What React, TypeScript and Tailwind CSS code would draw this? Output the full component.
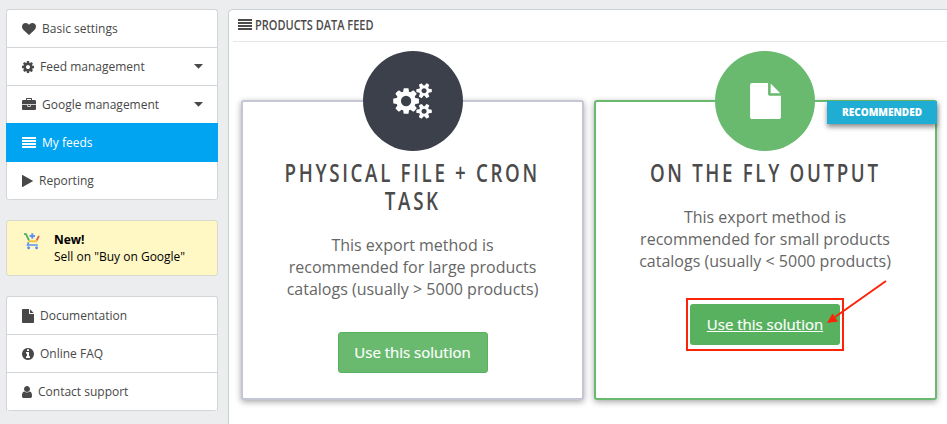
import type { ReactNode } from 'react';
import clsx from 'clsx';

const ICONS = {
  heart: {
    box: '0 0 1792 1792',
    size: 'w-[14px] h-[14px]',
    d: 'M896 1664q-26 0-44-18l-624-602q-10-8-27.5-26t-55.5-65.5-68-97.5-53.5-121-23.5-138q0-220 127-344t351-124q62 0 126.5 21.5t120 58 95.5 68.5 76 68q36-36 76-68t95.5-68.5 120-58 126.5-21.5q224 0 351 124t127 344q0 221-229 450l-623 600q-18 18-44 18z',
  },
  cog: {
    box: '128 0 1536 1792',
    size: 'w-[12px] h-[14px]',
    d: 'M1152 896q0-106-75-181t-181-75-181 75-75 181 75 181 181 75 181-75 75-181zm512-109v222q0 12-8 23t-20 13l-185 28q-19 54-39 91 35 50 107 138 10 12 10 25t-9 23q-27 37-99 108t-94 71q-12 0-26-9l-138-108q-44 23-91 38-16 136-29 186-7 28-36 28h-222q-14 0-24.5-8.5t-11.5-21.5l-28-184q-49-16-90-37l-141 107q-10 9-25 9-14 0-25-11-126-114-165-168-7-10-7-23 0-12 8-23 15-21 51-66.5t54-70.5q-27-50-41-99l-183-27q-13-2-21-12.5t-8-23.5v-222q0-12 8-23t19-13l186-28q14-46 39-92-40-57-107-138-10-12-10-24 0-10 9-23 26-36 98.5-107.5t94.5-71.5q13 0 26 10l138 107q44-23 91-38 16-136 29-186 7-28 36-28h222q14 0 24.5 8.5t11.5 21.5l28 184q49 16 90 37l142-107q9-9 24-9 13 0 25 10 129 119 165 170 7 8 7 22 0 12-8 23-15 21-51 66.5t-54 70.5q26 50 41 98l183 28q13 2 21 12.5t8 23.5z',
  },
  briefcase: {
    box: '0 0 1792 1792',
    size: 'w-[14px] h-[14px]',
    d: 'M640 256h512v-128h-512v128zm1152 640v480q0 66-47 113t-113 47h-1472q-66 0-113-47t-47-113v-480h672v160q0 26 19 45t45 19h320q26 0 45-19t19-45v-160h672zm-768 0v128h-256v-128h256zm768-480v384h-1792v-384q0-66 47-113t113-47h352v-160q0-40 28-68t68-28h576q40 0 68 28t28 68v160h352q66 0 113 47t47 113z',
  },
  lines: {
    box: '0 0 14 14',
    size: 'w-[14px] h-[14px]',
    d: 'M0 1h14v2H0zM0 4h14v2H0zM0 7h14v2H0zM0 10h14v2H0z',
  },
  play: {
    box: '0 0 11 14',
    size: 'w-[11px] h-[14px]',
    d: 'M0 1.3Q0 .7 .6 1L10.8 6.7Q11.2 7 10.8 7.3L.6 13Q0 13.3 0 12.7z',
  },
  file: {
    box: '128 0 1536 1792',
    size: 'w-[12px] h-[14px]',
    d: 'M1152 512v-472q22 14 36 28l408 408q14 14 28 36h-472zm-128 32q0 40 28 68t68 28h544v1056q0 40-28 68t-68 28h-1344q-40 0-68-28t-28-68v-1600q0-40 28-68t68-28h800v544z',
  },
  info: {
    box: '128 0 1536 1792',
    size: 'w-[12px] h-[14px]',
    d: 'M1152 1376v-160q0-14-9-23t-23-9h-96v-512q0-14-9-23t-23-9h-320q-14 0-23 9t-9 23v160q0 14 9 23t23 9h96v320h-96q-14 0-23 9t-9 23v160q0 14 9 23t23 9h448q14 0 23-9t9-23zm-128-896v-160q0-14-9-23t-23-9h-192q-14 0-23 9t-9 23v160q0 14 9 23t23 9h192q14 0 23-9t9-23zm640 416q0 209-103 385.5t-279.5 279.5-385.5 103-385.5-103-279.5-279.5-103-385.5 103-385.5 279.5-279.5 385.5-103 385.5 103 279.5 279.5 103 385.5z',
  },
  user: {
    box: '256 0 1280 1792',
    size: 'w-[10px] h-[14px]',
    d: 'M1536 1399q0 109-62.5 187t-150.5 78h-854q-88 0-150.5-78t-62.5-187q0-85 8.5-160.5t31.5-152 58.5-131 94-89 134.5-34.5q131 128 313 128t313-128q76 0 134.5 34.5t94 89 58.5 131 31.5 152 8.5 160.5zm-256-887q0 159-112.5 271.5t-271.5 112.5-271.5-112.5-112.5-271.5 112.5-271.5 271.5-112.5 271.5 112.5 112.5 271.5z',
  },
  cogs: {
    box: '-64 0 1920 1792',
    size: 'w-[39px] h-[36px]',
    d: 'M832 896q0-106-75-181t-181-75-181 75-75 181 75 181 181 75 181-75 75-181zm768 512q0-52-38-90t-90-38-90 38-38 90q0 53 37.5 90.5t90.5 37.5 90.5-37.5 37.5-90.5zm0-1024q0-52-38-90t-90-38-90 38-38 90q0 53 37.5 90.5t90.5 37.5 90.5-37.5 37.5-90.5zm-384 421v185q0 10-7 19.5t-16 10.5l-155 24q-11 35-32 76 34 48 90 115 7 11 7 20 0 12-7 19-23 30-82.5 89.5t-78.5 59.5q-11 0-21-7l-115-90q-37 19-77 31-11 108-23 155-7 24-30 24h-186q-11 0-20-7.5t-10-17.5l-23-153q-34-10-75-31l-118 89q-7 7-20 7-11 0-21-8-144-133-144-160 0-9 7-19 10-14 41-53t47-61q-23-44-35-82l-152-24q-10-1-17-9.5t-7-19.5v-185q0-10 7-19.5t16-10.5l155-24q11-35 32-76-34-48-90-115-7-11-7-20 0-12 7-20 22-30 82-89t79-59q11 0 21 7l115 90q34-18 77-32 11-108 23-154 7-24 30-24h186q11 0 20 7.5t10 17.5l23 153q34 10 75 31l118-89q8-7 20-7 11 0 21 8 144 133 144 160 0 8-7 19-12 16-42 54t-45 60q23 48 34 82l152 23q10 2 17 10.5t7 19.5zm640 533v140q0 16-149 31-12 27-30 52 51 113 51 138 0 4-4 7-122 71-124 71-8 0-46-47t-52-68q-20 2-30 2t-30-2q-14 21-52 68t-46 47q-2 0-124-71-4-3-4-7 0-25 51-138-18-25-30-52-149-15-149-31v-140q0-16 149-31 13-29 30-52-51-113-51-138 0-4 4-7 4-2 35-20t59-34 30-16q8 0 46 46.5t52 67.5q20-2 30-2t30 2q51-71 92-112l6-2q4 0 124 70 4 3 4 7 0 25-51 138 17 23 30 52 149 15 149 31zm0-1024v140q0 16-149 31-12 27-30 52 51 113 51 138 0 4-4 7-122 71-124 71-8 0-46-47t-52-68q-20 2-30 2t-30-2q-14 21-52 68t-46 47q-2 0-124-71-4-3-4-7 0-25 51-138-18-25-30-52-149-15-149-31v-140q0-16 149-31 13-29 30-52-51-113-51-138 0-4 4-7 4-2 35-20t59-34 30-16q8 0 46 46.5t52 67.5q20-2 30-2t30 2q51-71 92-112l6-2q4 0 124 70 4 3 4 7 0 25-51 138 17 23 30 52 149 15 149 31z',
  },
};

type IconName = keyof typeof ICONS;

interface MenuItem {
  icon: IconName;
  label: string;
  active?: boolean;
  caret?: boolean;
}

const MAIN_MENU: MenuItem[] = [
  { icon: 'heart', label: 'Basic settings' },
  { icon: 'cog', label: 'Feed management', caret: true },
  { icon: 'briefcase', label: 'Google management', caret: true },
  { icon: 'lines', label: 'My feeds', active: true },
  { icon: 'play', label: 'Reporting' },
];

const HELP_MENU: MenuItem[] = [
  { icon: 'file', label: 'Documentation' },
  { icon: 'info', label: 'Online FAQ' },
  { icon: 'user', label: 'Contact support' },
];

function Icon({ name, className }: { name: IconName; className?: string }) {
  const icon = ICONS[name];
  return (
    <svg viewBox={icon.box} fill="currentColor" className={clsx('shrink-0', className ?? icon.size)}>
      <path d={icon.d} />
    </svg>
  );
}

function Menu({ items, className }: { items: MenuItem[]; className?: string }) {
  return (
    <ul className={clsx('border-x border-t border-[#d3d5d6] bg-white', className)}>
      {items.map((item) => (
        <li
          key={item.label}
          className={clsx(
            'flex h-[38px] items-center border-b pl-[15px] pr-[14px] text-[12px]',
            item.active
              ? '-mx-px -mt-px h-[39px] border-[#00a4f0] bg-[#00a4f0] pl-[16px] pt-px text-white'
              : 'border-[#d3d5d6] text-[#484848] last:rounded-b-[3px]',
          )}
        >
          <Icon name={item.icon} />
          <span className="ml-[6px] grow">{item.label}</span>
          {item.caret && (
            <svg viewBox="0 0 9 5" className="h-[5px] w-[9px] fill-[#484848]">
              <path d="M0 0h9L4.500 4.700z" />
            </svg>
          )}
        </li>
      ))}
    </ul>
  );
}

function CartIcon() {
  return (
    <svg viewBox="0 0 16 17" fill="none" className="mt-[12px] h-[17px] w-[16px]">
      <path d="M0 1.200h2L5 7.500" stroke="#4fae67" strokeWidth="1.8" />
      <path d="M8.300 .3v5.400M5.600 3h5.400" stroke="#5b93ee" strokeWidth="1.900" />
      <path d="M15 2.800l-2.400 4.700" stroke="#ea5d4f" strokeWidth="1.8" />
      <path d="M4.500 8.300h8.500" stroke="#f7c33a" strokeWidth="2" />
      <path d="M4.600 9.300L3.600 12h10.200" stroke="#5b93ee" strokeWidth="1.7" />
      <circle cx="4.600" cy="14.800" r="1.500" fill="#5b93ee" />
      <circle cx="12.600" cy="14.800" r="1.500" fill="#5b93ee" />
    </svg>
  );
}

interface FeedCardProps {
  recommended?: boolean;
  icon: ReactNode;
  title: string[];
  text: string[];
  children: ReactNode;
}

function FeedCard({ recommended, icon, title, text, children }: FeedCardProps) {
  return (
    <div
      className={clsx(
        'relative flex h-[300px] w-[343px] flex-col items-center rounded-[3px] border-2 bg-white shadow-[0_2px_6px_rgba(0,0,0,0.35)]',
        recommended ? 'border-[#69ba6f] pr-px' : 'border-[#c4c7d3]',
      )}
    >
      <div
        className={clsx(
          '-mt-[51px] flex size-[100px] shrink-0 items-center justify-center rounded-full text-white',
          recommended ? 'bg-[#69ba6f]' : 'bg-[#3c404b]',
        )}
      >
        {icon}
      </div>
      {recommended && (
        <span className="absolute -right-[2px] -top-px flex h-[23px] w-[110px] items-center justify-center bg-[#1fadd3] text-[10px] font-extrabold text-white shadow-[0_3px_5px_rgba(0,0,0,0.45)]">
          RECOMMENDED
        </span>
      )}
      <h2 className="mt-[7px] flex flex-col items-center text-[26px] font-semibold leading-[28px] tracking-[3.7px] text-[#4b4b4b]">
        {title.map((line) => (
          <span key={line} className="scale-x-[0.72] whitespace-nowrap">
            {line}
          </span>
        ))}
      </h2>
      <p className="mt-[20px] text-center text-[16px] leading-[22px] text-[#666]">
        {text.map((line) => (
          <span key={line} className="block whitespace-nowrap">
            {line}
          </span>
        ))}
      </p>
      {children}
    </div>
  );
}

export default function App() {
  return (
    <div className="flex h-[424px] w-[947px] overflow-hidden bg-[#ecedef] font-['Open_Sans','Noto_Sans',sans-serif]">
      <aside className="ml-[6px] mt-[9px] w-[212px] shrink-0">
        <Menu items={MAIN_MENU} className="rounded-[3px]" />
        <div className="mt-[20px] flex h-[56px] rounded-[3px] border border-[#d9d9d2] bg-[#fff8c5] pl-[17px] text-[12px] leading-[17px] text-black">
          <CartIcon />
          <p className="ml-[14px] mt-[10px]">
            <b className="block">New!</b>
            Sell on "Buy on Google"
          </p>
        </div>
        <Menu items={HELP_MENU} className="mt-[20px] rounded-t-[3px]" />
      </aside>

      <main className="ml-[10px] mt-[9px] w-[740px] shrink-0 rounded-tl-[5px] border-l border-t border-[#cbd0d5] bg-white pl-[4px]">
        <h1 className="flex h-[32px] items-center border-b border-[#e6e6e6] pb-[2px] pl-[5px] text-[14px] font-semibold text-[#4b4b4b]">
          <Icon name="lines" />
          <span className="ml-[3px] origin-left scale-x-[0.785] whitespace-nowrap">PRODUCTS DATA FEED</span>
        </h1>
        <div className="ml-[8px] mt-[58px] flex gap-[10px]">
          <FeedCard
            icon={<Icon name="cogs" />}
            title={['PHYSICAL FILE + CRON', 'TASK']}
            text={['This export method is', 'recommended for large products', 'catalogs (usually > 5000 products)']}
          >
            <button className="mt-[32px] h-[41px] w-[150px] rounded-[3px] border border-[#58b15e] bg-[#69ba6f] text-[15px] text-white [-webkit-text-stroke:0.2px_white]">
              Use this solution
            </button>
          </FeedCard>
          <FeedCard
            recommended
            icon={<Icon name="file" className="h-[36px] w-[31px]" />}
            title={['ON THE FLY OUTPUT']}
            text={['This export method is', 'recommended for small products', 'catalogs (usually < 5000 products)']}
          >
            <div className="relative mt-[26px] border-2 border-[#fb2409] px-[2px] py-[4px]">
              <button className="block h-[41px] w-[150px] rounded-[3px] bg-[#58b15e] text-[15px] text-white underline [-webkit-text-stroke:0.2px_white]">
                Use this solution
              </button>
              <svg viewBox="0 0 62 45" className="absolute -top-[20px] left-[138px] h-[45px] w-[62px]">
                <path d="M60 1L9 37" stroke="#fb2409" strokeWidth="2" />
                <path d="M1 43L6.500 33.500L12 41.500z" fill="#fb2409" />
              </svg>
            </div>
          </FeedCard>
        </div>
      </main>
    </div>
  );
}
